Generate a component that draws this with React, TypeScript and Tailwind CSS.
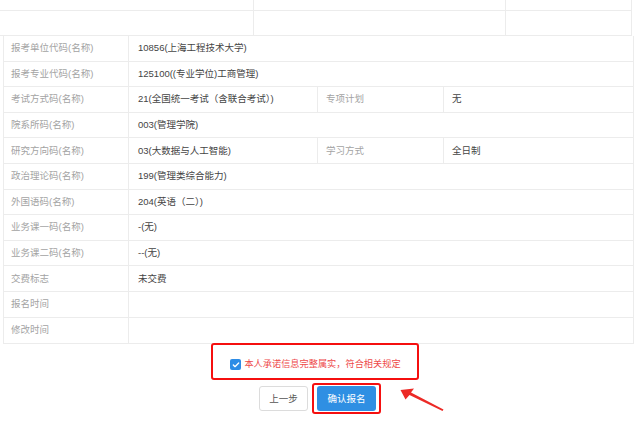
import { Check } from 'lucide-react';

type Row = {
    label: string;
    value?: string;
    label2?: string;
    value2?: string;
};

const rows: Row[] = [
    { label: '报考单位代码(名称)', value: '10856(上海工程技术大学)' },
    { label: '报考专业代码(名称)', value: '125100((专业学位)工商管理)' },
    { label: '考试方式码(名称)', value: '21(全国统一考试（含联合考试）)', label2: '专项计划', value2: '无' },
    { label: '院系所码(名称)', value: '003(管理学院)' },
    { label: '研究方向码(名称)', value: '03(大数据与人工智能)', label2: '学习方式', value2: '全日制' },
    { label: '政治理论码(名称)', value: '199(管理类综合能力)' },
    { label: '外国语码(名称)', value: '204(英语（二）)' },
    { label: '业务课一码(名称)', value: '-(无)' },
    { label: '业务课二码(名称)', value: '--(无)' },
    { label: '交费标志', value: '未交费' },
    { label: '报名时间' },
    { label: '修改时间' },
];

export default function App() {
    return (
        <div className="relative h-[423px] w-[640px] overflow-hidden bg-white text-[9.5px] [font-family:'Liberation_Sans','Noto_Sans_CJK_SC',sans-serif]">
            {/* rows cut off at the top */}
            <div className="w-[632px]">
                <div className="flex h-[11px] border-b border-[#ececec]">
                    <div className="w-[254px] border-r border-[#ececec]" />
                    <div className="w-[252px] border-r border-[#ececec]" />
                    <div className="flex-1 border-r border-[#ececec]" />
                </div>
                <div className="flex h-[25px] border-b border-[#ececec]">
                    <div className="w-[254px] border-r border-[#ececec]" />
                    <div className="w-[252px] border-r border-[#ececec]" />
                    <div className="flex-1 border-r border-[#ececec]" />
                </div>
            </div>

            {/* info table */}
            <div className="ml-[3px] w-[631px] border-x border-b border-[#ececec]">
                {rows.map((r) => (
                    <div key={r.label} className="flex h-[25.6px] border-b border-[#ececec] last:border-b-0">
                        <div className="flex w-[125px] items-center border-r border-[#ececec] pl-[7px] text-[#a3a3a3]">{r.label}</div>
                        {r.label2 ? (
                            <>
                                <div className="flex w-[189px] items-center border-r border-[#ececec] pl-[9px] text-[#444]">{r.value}</div>
                                <div className="flex w-[126px] items-center border-r border-[#ececec] pl-[8px] text-[#a3a3a3]">{r.label2}</div>
                                <div className="flex flex-1 items-center pl-[8px] text-[#444]">{r.value2}</div>
                            </>
                        ) : (
                            <div className="flex flex-1 items-center pl-[9px] text-[#444]">{r.value}</div>
                        )}
                    </div>
                ))}
            </div>

            {/* promise checkbox */}
            <div className="-mt-px flex justify-center pr-[11px]">
                <div className="flex h-[37px] w-[208px] items-center justify-center gap-[3px] rounded-[3px] border-2 border-[#f50f0f] pt-[6px] pl-[2px]">
                    <span className="flex h-[11px] w-[11px] items-center justify-center rounded-[2px] bg-[#2d8ce6]">
                        <Check className="h-[8px] w-[8px] text-white" strokeWidth={4} />
                    </span>
                    <span className="text-[9.2px] text-[#ee4a4a]">本人承诺信息完整属实，符合相关规定</span>
                </div>
            </div>

            {/* buttons */}
            <div className="mt-[3px] flex items-center justify-center gap-[4px]">
                <button type="button" className="h-[25px] w-[49px] rounded-[3px] border border-[#dcdcdc] bg-white text-[#555]">
                    上一步
                </button>
                <div className="rounded-[3px] border-2 border-[#f50f0f] px-[3px] py-[1px]">
                    <button type="button" className="h-[25px] w-[59px] rounded-[3px] bg-[#2f8fe3] text-white">
                        确认报名
                    </button>
                </div>
            </div>

            {/* annotation arrow */}
            <svg className="absolute left-[398px] top-[386px]" width="48" height="28" viewBox="398 386 48 28">
                <polygon points="400.5,390 414,388.5 411,392.5 443.5,409.5 442.5,411 409.5,395 405.5,399.5" fill="#ec2a26" />
            </svg>
        </div>
    );
}
